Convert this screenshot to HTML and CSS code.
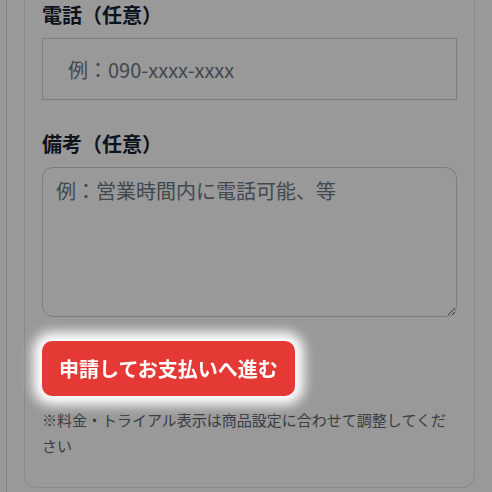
FILE: index.html
```html
<!DOCTYPE html>
<html lang="ja">
<head>
<meta charset="utf-8">
<link rel="stylesheet" href="styles.css">
</head>
<body>
<div class="outer">
  <div class="card">
    <div class="field">
      <label class="label">電話（任意）</label>
      <input class="input" type="text" placeholder="例：090-xxxx-xxxx">
    </div>
    <div class="field field-gap">
      <label class="label">備考（任意）</label>
      <textarea class="textarea" placeholder="例：営業時間内に電話可能、等"></textarea>
    </div>
    <button class="submit" type="button">申請してお支払いへ進む</button>
    <p class="note">※料金・トライアル表示は商品設定に合わせて調整してください</p>
  </div>
</div>
<div class="overlay"></div>
</body>
</html>
```
FILE: styles.css
```css
html, body {
  margin: 0;
  padding: 0;
  background: #fff;
  font-family: "Noto Sans CJK JP", "Noto Sans", sans-serif;
  height: 100%;
  overflow: hidden;
}
.outer {
  margin-left: 6px;
  border-left: 1px solid #d6d6d6;
  padding-left: 17px;
  min-height: 100%;
  box-sizing: border-box;
  width: 469px;
}
.card {
  width: 451px;
  box-sizing: border-box;
  border: 1px solid #e4e4e4;
  border-top: none;
  border-radius: 0 0 13px 13px;
  padding: 0 17px 28px 17px;
  background: #fff;
}
.field {
  display: flex;
  flex-direction: column;
  gap: 8px;
}
.field-gap {
  margin-top: 29px;
}
.label {
  font-size: 20px;
  line-height: 30px;
  font-weight: 700;
  color: #17202e;
}
.input {
  box-sizing: border-box;
  width: 415px;
  height: 62px;
  border: 1px solid #d0d0d0;
  border-radius: 0;
  padding: 0 25px;
  font-family: inherit;
  font-size: 20px;
  color: #1f2937;
  background: #fff;
  outline: none;
}
.textarea {
  box-sizing: border-box;
  width: 415px;
  height: 150px;
  border: 1px solid #d0d0d0;
  border-radius: 11px;
  padding: 8px 13px;
  font-family: inherit;
  font-size: 20px;
  line-height: 30px;
  color: #1f2937;
  background: #fff;
  outline: none;
  display: block;
}
.input::placeholder, .textarea::placeholder {
  color: #6c7886;
  opacity: 1;
}
.submit {
  position: relative;
  z-index: 20;
  margin-top: 24px;
  height: 55px;
  padding: 0 17px;
  border: none;
  border-radius: 10px;
  background: #e53935;
  color: #fff;
  font-family: inherit;
  font-size: 20px;
  font-weight: 700;
  box-shadow: 0 0 12px 9px #fff;
  display: block;
}
.note {
  margin: 11px 0 0 0;
  font-size: 15px;
  line-height: 26px;
  color: #5f6672;
}
.overlay {
  position: fixed;
  inset: 0;
  background: rgba(0, 0, 0, 0.4);
  z-index: 10;
}
```
